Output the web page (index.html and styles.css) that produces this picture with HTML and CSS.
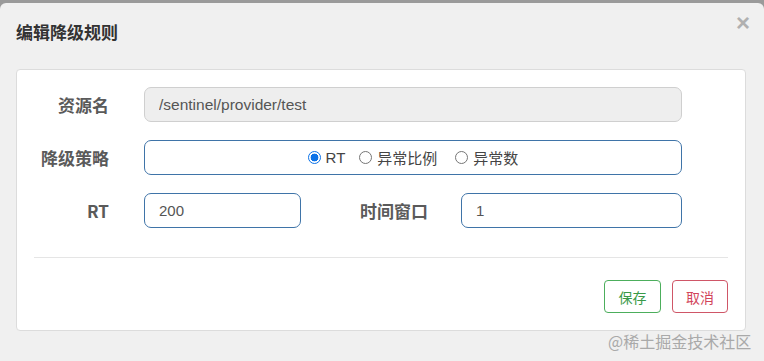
FILE: index.html
```html
<!DOCTYPE html>
<html lang="zh">
<head>
<meta charset="utf-8">
<title>编辑降级规则</title>
<link rel="stylesheet" href="styles.css">
</head>
<body>
<div class="dialog">
  <div class="header">
    <h3 class="title">编辑降级规则</h3>
    <span class="close">×</span>
  </div>
  <div class="panel">
    <div class="form-row">
      <label class="label">资源名</label>
      <input class="input input-disabled" type="text" value="/sentinel/provider/test" disabled>
    </div>
    <div class="form-row">
      <label class="label">降级策略</label>
      <div class="input radio-box">
        <label class="radio"><span class="dot checked"></span>RT</label>
        <label class="radio"><span class="dot"></span>异常比例</label>
        <label class="radio"><span class="dot"></span>异常数</label>
      </div>
    </div>
    <div class="form-row">
      <label class="label">RT</label>
      <input class="input input-short" type="text" value="200">
      <label class="label label-mid">时间窗口</label>
      <input class="input input-win" type="text" value="1">
    </div>
    <hr class="divider">
    <div class="footer">
      <button class="btn btn-save">保存</button>
      <button class="btn btn-cancel">取消</button>
    </div>
  </div>
  <div class="watermark">@稀土掘金技术社区</div>
</div>
</body>
</html>
```

FILE: styles.css
```css
* { box-sizing: border-box; }
html, body { margin: 0; padding: 0; }
body {
  background: #9a9a9a;
  width: 764px;
  height: 361px;
  overflow: hidden;
  font-family: "Liberation Sans", "Noto Sans CJK SC", sans-serif;
}
.dialog {
  position: relative;
  margin-top: 3px;
  height: 358px;
  background: #f0f0f0;
  border-radius: 6px 6px 0 0;
  padding: 17px 18px 0 16px;
}
.header {
  position: relative;
  height: 24px;
}
.title {
  margin: 0;
  font-size: 17px;
  line-height: 24px;
  font-weight: bold;
  color: #333;
  font-family: "Noto Sans CJK SC", sans-serif;
}
.close {
  position: absolute;
  right: -4px;
  top: -9px;
  font-size: 24px;
  font-weight: bold;
  color: #b0b0b0;
  line-height: 24px;
}
.panel {
  margin-top: 25px;
  background: #fff;
  border: 1px solid #dcdcdc;
  border-radius: 4px;
  padding: 17px;
  height: 262px;
}
.form-row {
  display: flex;
  align-items: center;
  height: 35px;
  margin-bottom: 18px;
  width: 648px;
}
.form-row:last-of-type { margin-bottom: 0; }
.label {
  width: 75px;
  margin-right: 35px;
  text-align: right;
  font-family: "Noto Sans CJK SC", sans-serif;
  font-weight: bold;
  font-size: 17px;
  color: #5a5a5a;
}
.input {
  height: 35px;
  width: 538px;
  border: 1px solid #3f74a8;
  border-radius: 7px;
  padding: 0 14px;
  font-family: "Liberation Sans", "Noto Sans CJK SC", sans-serif;
  font-size: 15px;
  color: #555;
  background: #fff;
  outline: none;
}
.input-disabled {
  background: #eee;
  border-color: #cfcfcf;
  font-size: 15.5px;
  color: #555;
  -webkit-text-fill-color: #555;
  opacity: 1;
}
.input-short { width: 157px; }
.label-mid {
  width: 127px;
  margin-right: 33px;
}
.input-win { width: 221px; }
.radio-box {
  display: flex;
  align-items: center;
  justify-content: center;
}
.radio {
  display: flex;
  align-items: center;
  font-size: 15px;
  color: #444;
  font-family: "Liberation Sans", "Noto Sans CJK SC", sans-serif;
}
.radio:nth-child(2) { margin-left: 14px; }
.radio:nth-child(3) { margin-left: 18px; }
.dot {
  width: 13px;
  height: 13px;
  border: 1px solid #767676;
  border-radius: 50%;
  margin-right: 5px;
  display: inline-block;
  background: #fff;
}
.dot.checked {
  border: 1.5px solid #0b72e8;
  background: radial-gradient(circle, #0b72e8 0 3.6px, #fff 4.2px);
}
.divider {
  margin: 29px 0 0 0;
  border: 0;
  border-top: 1px solid #e5e5e5;
  height: 0;
}
.footer {
  display: flex;
  justify-content: flex-end;
  gap: 11px;
  margin-top: 22px;
}
.btn {
  height: 33px;
  width: 57px;
  background: #fff;
  border-radius: 4px;
  font-size: 14px;
  font-family: "Noto Sans CJK SC", sans-serif;
  padding: 0;
}
.btn-save { border: 1px solid #4cae5c; color: #3a9a48; }
.btn-cancel { border: 1px solid #cf5667; color: #d2455a; width: 56px; }
.watermark {
  position: absolute;
  left: 608px;
  top: 328px;
  font-size: 16px;
  line-height: 20px;
  color: #a9a9a9;
  font-family: "Noto Sans CJK SC", sans-serif;
}
```
